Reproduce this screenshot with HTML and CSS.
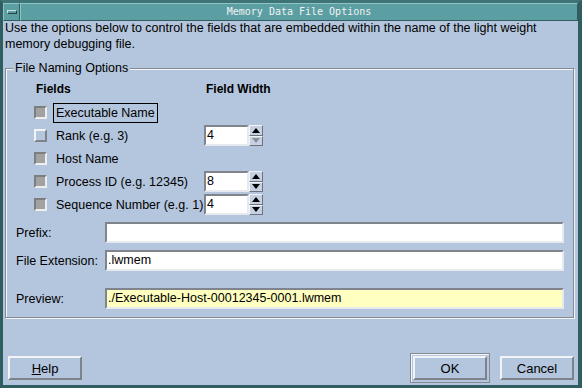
FILE: index.html
```html
<!DOCTYPE html>
<html lang="en">
<head>
    <meta charset="UTF-8">
    <title>Memory Data File Options</title>
    <link rel="stylesheet" href="styles.css">
</head>
<body>
    <div class="window">
        <div class="titlebar">
            <div class="menu-btn"><span class="menu-dash"></span></div>
            <div class="title">Memory Data File Options</div>
        </div>
        <div class="content">
            <p class="intro">Use the options below to control the fields that are embedded within the name of the light weight<br>memory debugging file.</p>

            <fieldset class="group">
                <legend>File Naming Options</legend>

                <div class="fields">
                    <div class="head head-fields">Fields</div>
                    <div class="head head-width">Field Width</div>

                    <span class="check on"></span>
                    <span class="label focus">Executable Name</span>
                    <span></span>

                    <span class="check"></span>
                    <span class="label">Rank (e.g. 3)</span>
                    <div class="spin">
                        <span class="spin-text">4</span>
                        <div class="arrows">
                            <span class="arrow"><svg width="8" height="5" viewBox="0 0 8 5"><path d="M4 0 L8 5 L0 5 Z" fill="#000"/></svg></span>
                            <span class="arrow"><svg width="8" height="5" viewBox="0 0 8 5"><path d="M0 0 L8 0 L4 5 Z" fill="#8a8f98"/></svg></span>
                        </div>
                    </div>

                    <span class="check on"></span>
                    <span class="label">Host Name</span>
                    <span></span>

                    <span class="check on"></span>
                    <span class="label">Process ID (e.g. 12345)</span>
                    <div class="spin">
                        <span class="spin-text">8</span>
                        <div class="arrows">
                            <span class="arrow"><svg width="8" height="5" viewBox="0 0 8 5"><path d="M4 0 L8 5 L0 5 Z" fill="#000"/></svg></span>
                            <span class="arrow"><svg width="8" height="5" viewBox="0 0 8 5"><path d="M0 0 L8 0 L4 5 Z" fill="#000"/></svg></span>
                        </div>
                    </div>

                    <span class="check on"></span>
                    <span class="label">Sequence Number (e.g. 1)</span>
                    <div class="spin">
                        <span class="spin-text">4</span>
                        <div class="arrows">
                            <span class="arrow"><svg width="8" height="5" viewBox="0 0 8 5"><path d="M4 0 L8 5 L0 5 Z" fill="#000"/></svg></span>
                            <span class="arrow"><svg width="8" height="5" viewBox="0 0 8 5"><path d="M0 0 L8 0 L4 5 Z" fill="#000"/></svg></span>
                        </div>
                    </div>
                </div>

                <div class="entry">
                    <span class="entry-label">Prefix:</span>
                    <span class="text-field"></span>
                </div>
                <div class="entry">
                    <span class="entry-label">File Extension:</span>
                    <span class="text-field">.lwmem</span>
                </div>
                <div class="entry preview">
                    <span class="entry-label">Preview:</span>
                    <span class="text-field yellow">./Executable-Host-00012345-0001.lwmem</span>
                </div>
            </fieldset>

            <div class="buttons">
                <button class="btn"><u>H</u>elp</button>
                <div class="right-buttons">
                    <div class="default-ring"><button class="btn">OK</button></div>
                    <button class="btn">Cancel</button>
                </div>
            </div>
        </div>
    </div>
</body>
</html>
```

FILE: styles.css
```css
/* General */
body {
    margin: 0;
    padding: 0;
    font-family: "Liberation Sans", Arial, sans-serif;
    font-size: 12.5px;
    color: black;
}

.window {
    width: 582px;
    height: 388px;
    box-sizing: border-box;
    background-color: #2f5d60;
    border-top: 3px solid #3f7477;
    border-left: 3px solid #2f5d60;
    border-right: 4px solid #2f5d60;
    border-bottom: 3px solid #2f5d60;
    display: flex;
    flex-direction: column;
}

/* Title bar */
.titlebar {
    height: 18px;
    display: flex;
    background-color: #5b9fa3;
}

.menu-btn {
    width: 17px;
    box-sizing: border-box;
    border-top: 1px solid #8fc4c7;
    border-left: 1px solid #8fc4c7;
    border-right: 1px solid #2f5d60;
    border-bottom: 1px solid #2f5d60;
    display: flex;
    align-items: center;
    justify-content: center;
}

.menu-dash {
    width: 8px;
    height: 2px;
    border-top: 1px solid #c9e2e3;
    border-left: 1px solid #c9e2e3;
    border-right: 1px solid #1f4244;
    border-bottom: 1px solid #1f4244;
}

.title {
    flex: 1;
    box-sizing: border-box;
    border-top: 1px solid #8fc4c7;
    border-left: 1px solid #8fc4c7;
    border-right: 1px solid #2f5d60;
    border-bottom: 1px solid #2f5d60;
    text-align: center;
    font-family: "DejaVu Sans Mono", monospace;
    font-size: 10px;
    line-height: 16px;
    color: #f2f2f2;
}

/* Dialog body */
.content {
    flex: 1;
    background-color: #b4c6dd;
    padding: 0 4px 5px 2px;
    display: flex;
    flex-direction: column;
}

.intro {
    margin: -1px 0 0 0;
    line-height: 16px;
    white-space: nowrap;
}

/* Group box */
.group {
    margin: 9px 0 0 0;
    padding: 1px 9px 8px 10px;
    border: 1px solid #858a92;
    box-shadow: inset 1px 1px 0 #f4f6fa, 1px 1px 0 #f4f6fa;
}

.group legend {
    margin-left: -3px;
    padding: 0 2px;
    background-color: #b4c6dd;
    line-height: 15px;
}

.fields {
    display: grid;
    grid-template-columns: 13px 145px auto;
    grid-template-rows: 24px repeat(5, 23px);
    column-gap: 6px;
    align-items: center;
    margin-left: 18px;
}

.head {
    font-weight: bold;
    font-size: 12px;
}

.head-fields {
    grid-column: 1 / 3;
    padding-left: 2px;
}

.head-width {
    padding-left: 2px;
}

.check {
    width: 13px;
    height: 13px;
    box-sizing: border-box;
    border-top: 2px solid #f2f4f8;
    border-left: 2px solid #f2f4f8;
    border-right: 2px solid #7e838b;
    border-bottom: 2px solid #7e838b;
    background-color: #b4c6dd;
}

.check.on {
    border-top-color: #7e7e7e;
    border-left-color: #7e7e7e;
    border-right-color: #eeeeee;
    border-bottom-color: #eeeeee;
    background-color: #a2a2a2;
}

.label {
    justify-self: start;
    white-space: nowrap;
    padding: 1px 2px;
    border: 1px solid transparent;
    line-height: 16px;
}

.label.focus {
    border-color: #000;
}

/* Spin boxes */
.spin {
    display: flex;
    height: 21px;
}

.spin-text {
    width: 45px;
    box-sizing: border-box;
    background-color: #fff;
    border-top: 2px solid #80848c;
    border-left: 2px solid #80848c;
    border-right: 2px solid #e6e9ee;
    border-bottom: 2px solid #e6e9ee;
    padding-left: 1px;
    line-height: 17px;
}

.arrows {
    width: 14px;
    display: flex;
    flex-direction: column;
    background-color: #9aa2ae;
}

.arrow {
    flex: 1;
    box-sizing: border-box;
    border-top: 1px solid #f2f4f8;
    border-left: 1px solid #f2f4f8;
    border-right: 1px solid #6f747c;
    border-bottom: 1px solid #6f747c;
    background-color: #c6d2e3;
    display: flex;
    align-items: center;
    justify-content: center;
}

/* Text entries */
.entry {
    display: flex;
    align-items: center;
    margin-top: 6px;
}

.entry + .entry {
    margin-top: 7px;
}

.entry.preview {
    margin-top: 17px;
}

.entry-label {
    width: 89px;
    white-space: nowrap;
}

.text-field {
    flex: 1;
    height: 21px;
    box-sizing: border-box;
    background-color: #fff;
    border-top: 2px solid #80848c;
    border-left: 2px solid #80848c;
    border-right: 2px solid #e6e9ee;
    border-bottom: 2px solid #e6e9ee;
    padding-left: 1px;
    line-height: 17px;
    white-space: nowrap;
}

.text-field.yellow {
    background-color: #ffffc0;
}

/* Bottom buttons */
.buttons {
    margin-top: auto;
    display: flex;
    justify-content: space-between;
    align-items: center;
    padding-left: 3px;
}

.right-buttons {
    display: flex;
    align-items: center;
    gap: 10px;
}

.default-ring {
    padding: 2px;
    border: 1px solid #858a92;
    box-shadow: inset 1px 1px 0 #f4f6fa;
    margin: -3px 0;
}

.btn {
    width: 74px;
    height: 24px;
    box-sizing: border-box;
    font-family: "Liberation Sans", Arial, sans-serif;
    font-size: 13px;
    color: #000;
    background-color: #b4c6dd;
    border-top: 2px solid #f2f4f8;
    border-left: 2px solid #f2f4f8;
    border-right: 2px solid #7e838b;
    border-bottom: 2px solid #7e838b;
    padding: 0;
    display: block;
}
```
